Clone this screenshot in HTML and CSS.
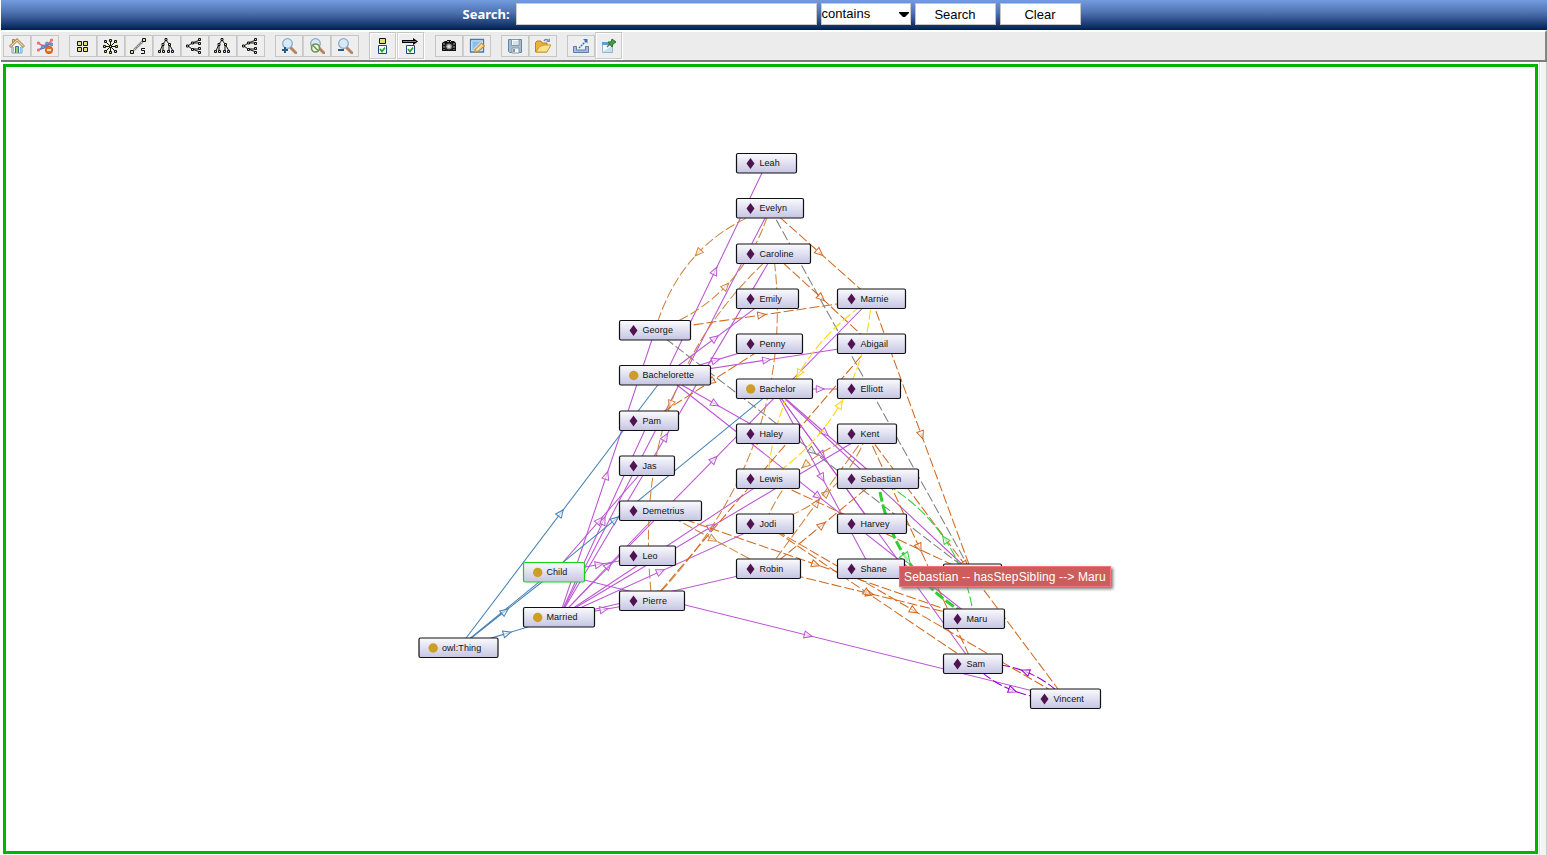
FILE: index.html
```html
<!DOCTYPE html>
<html lang="en">
<head>
<meta charset="utf-8">
<title>Ontology graph</title>
<link rel="stylesheet" href="styles.css">
</head>
<body>
<div class="app">
  <header class="search-bar">
    <label class="search-label" for="q">Search:</label>
    <input class="search-input" id="q" type="text">
    <div class="mode"><span>contains</span><svg width="10" height="5" viewBox="0 0 10 5"><path d="M0 0H10V1L6 5H4L0 1Z"/></svg></div>
    <button class="btn">Search</button>
    <button class="btn">Clear</button>
  </header>
  <nav class="toolbar">
    <div class="group">
      <button class="tool"><svg viewBox="0 0 16 16"><path d="M3 7V15H13V7L8 2Z" fill="#f4fbff" stroke="#6c9fc5"/><path d="M3.500 1.500H5.500V5L3.500 6Z" fill="#e7d3a6" stroke="#a57d4d"/><path d="M1 9L8 2L15 9" fill="none" stroke="#a17b4b" stroke-width="2.800"/><path d="M1.500 8.500L8 2L14.500 8.500" fill="none" stroke="#efd9a8" stroke-width="1.200"/><path d="M4.500 9V14M11.500 9V14" stroke="#8bbce0"/><path d="M6.500 15V8.500H9.500V15" fill="#8ed15f" stroke="#3d71a6"/></svg></button>
      <button class="tool"><svg viewBox="0 0 16 16"><path d="M1 5L8 9L15 2M1 12L8 9L15 5M5 8L12 6" fill="none" stroke="#f06a70" stroke-width="1.500"/><path d="M3 11L8 9L12 6" stroke="#4f87d0" fill="none" stroke-width="1.500"/><g fill="#f26c70"><circle cx="1.500" cy="5" r="1.600"/><circle cx="14.500" cy="2" r="1.600"/><circle cx="1.500" cy="12" r="1.600"/></g><g fill="#6a9fe0" stroke="#3f70b8" stroke-width=".6"><circle cx="6" cy="9" r="1.800"/><circle cx="10" cy="5.500" r="1.500"/><circle cx="14.500" cy="6.500" r="1.500"/></g><circle cx="12" cy="12" r="3.700" fill="#ed7117" stroke="#c4420e" stroke-width=".7"/><path d="M10 12H14" stroke="#fff" stroke-width="1.500"/></svg></button>
    </div>
    <div class="group">
      <button class="tool"><svg viewBox="0 0 16 16" class="net"><path d="M3.500 3.500H7.500V7.500H3.500ZM9.500 3.500H13.500V7.500H9.500ZM3.500 9.500H7.500V13.500H3.500ZM9.500 9.500H13.500V13.500H9.500Z"/></svg></button>
      <button class="tool"><svg viewBox="0 0 16 16" class="net"><path d="M8.500 2V15M2 8.500H15M4 4L13 13M13 4L4 13"/><path d="M7.500 1.500h2v2h-2zM7.500 13.500h2v2h-2zM1.500 7.500h2v2h-2zM13.500 7.500h2v2h-2zM2.500 2.500h2v2h-2zM12.500 2.500h2v2h-2zM2.500 12.500h2v2h-2zM12.500 12.500h2v2h-2zM7.500 7.500h2v2h-2z"/></svg></button>
      <button class="tool"><svg viewBox="0 0 16 16" class="net"><g class="spring"><path d="M4 12L13 3"/><path class="coil" d="M4 12L13 3"/></g><path d="M.5 12.500h3v3h-3zM12.500 .5h3v3h-3z"/><path d="M15 10.500H11.500V12.500H14.500V15.500H11" fill="none"/></svg></button>
      <button class="tool"><svg viewBox="0 0 16 16" class="net"><path d="M8 2L5 6L2 13M5 6V13M8 2L11 6L15 13M11 6V13" fill="none"/><path d="M7 .5h2v2h-2zM4 5.500h2v2h-2zM10.500 5.500h2v2h-2zM.5 12.500h2v2h-2zM4.500 12.500h2v2h-2zM9.500 12.500h2v2h-2zM13.500 12.500h2v2h-2z"/></svg></button>
      <button class="tool"><svg viewBox="0 0 16 16" class="net"><path d="M2 8L6 5L14 2M6 5H14M2 8L6 11L14 14M6 11H14" fill="none"/><path d="M.5 7h2v2h-2zM5.500 4h2v2h-2zM5.500 10.500h2v2h-2zM12.500 .5h2v2h-2zM12.500 4.500h2v2h-2zM12.500 9.500h2v2h-2zM12.500 13.500h2v2h-2z"/></svg></button>
      <button class="tool"><svg viewBox="0 0 16 16" class="net"><path d="M8 2L5 6L2 13M5 6V13M8 2L11 6L15 13M11 6V13" fill="none"/><path d="M7 .5h2v2h-2zM4 5.500h2v2h-2zM10.500 5.500h2v2h-2zM.5 12.500h2v2h-2zM4.500 12.500h2v2h-2zM9.500 12.500h2v2h-2zM13.500 12.500h2v2h-2z"/></svg></button>
      <button class="tool"><svg viewBox="0 0 16 16" class="net"><path d="M2 8L6 5L14 2M6 5H14M2 8L6 11L14 14M6 11H14" fill="none"/><path d="M.5 7h2v2h-2zM5.500 4h2v2h-2zM5.500 10.500h2v2h-2zM12.500 .5h2v2h-2zM12.500 4.500h2v2h-2zM12.500 9.500h2v2h-2zM12.500 13.500h2v2h-2z"/></svg></button>
    </div>
    <div class="group">
      <button class="tool"><svg viewBox="0 0 16 16" class="lens"><path class="grip" d="M10 10L15 15"/><circle cx="6.500" cy="5.500" r="4.800"/><path class="sign" d="M1 12H7M4 9V15"/></svg></button>
      <button class="tool"><svg viewBox="0 0 16 16" class="lens"><path class="grip" d="M10 10L15 15"/><circle cx="6.500" cy="5.500" r="4.800"/><circle class="reset" cx="6.500" cy="10" r="4"/><path d="M4 7.500L9 12.500" stroke="#6f9351" stroke-width="1.500"/></svg></button>
      <button class="tool"><svg viewBox="0 0 16 16" class="lens"><path class="grip" d="M10 10L15 15"/><circle cx="6.500" cy="5.500" r="4.800"/><path class="sign" d="M1 12H7"/></svg></button>
    </div>
    <div class="group">
      <button class="tool raised"><svg viewBox="0 0 16 16"><path d="M5.500 .5H11.500V5.500H5.500Z" fill="#e3df73" stroke="#111"/><path d="M4.500 7.500H12.500V15.500H4.500Z" fill="#fff" stroke="#194a7c"/><path d="M6 11L8 13.500L11 9.500" fill="none" stroke="#23a523" stroke-width="1.700"/></svg></button>
      <button class="tool raised"><svg viewBox="0 0 16 16"><path d="M0 3.500H14" stroke="#000" stroke-width="3"/><path d="M11 0L16 3.500L11 7Z"/><path d="M1 3.500H14" stroke="#1b9fe5"/><path d="M4.500 7.500H12.500V15.500H4.500Z" fill="#fff" stroke="#194a7c"/><path d="M6 11L8 13.500L11 9.500" fill="none" stroke="#23a523" stroke-width="1.700"/></svg></button>
    </div>
    <div class="group">
      <button class="tool"><svg viewBox="0 0 16 16"><path d="M1 5L4 3H6V2H10V3H13L15 5V13H1Z" fill="#111"/><path d="M3 5V12M13 5V12M6 3.500H10" stroke="#aaa" stroke-dasharray="2 1"/><circle cx="8" cy="8.500" r="3.500" fill="#8b9292" stroke="#222"/><circle cx="8" cy="8.500" r="1.700" fill="#d8dcda"/></svg></button>
      <button class="tool"><svg viewBox="0 0 16 16"><path d="M1.500 1.500H14.500V14H1.500Z" fill="#d9edfd" stroke="#4779ad" stroke-width="1.300"/><path d="M3.500 3.500H12.500V12H3.500Z" fill="#8ebce8" stroke="#a9cbed"/><path d="M4 11L11 4H12V10L8 12Z" fill="#c4def4"/><path d="M5.500 14.500L6.500 11L12.500 5L15.500 8L9 13.500Z" fill="#f6cb70" stroke="#bc833a"/><path d="M8 12L13 7" stroke="#fff0a9"/></svg></button>
    </div>
    <div class="group">
      <button class="tool"><svg viewBox="0 0 16 16"><path d="M1.500 1.500H14.500V14.500H2.500L1.500 13.500Z" fill="#a7bdcf" stroke="#6484a2"/><path d="M4.500 1.500H12V7.500H4.500ZM5 10H12V15H5Z" fill="#f5fafc" stroke="#8299ae"/><path d="M6 4H11M6 6H11" stroke="#b9c9d7"/><path d="M7 11V14" stroke="#58718b" stroke-width="1.500"/></svg></button>
      <button class="tool"><svg viewBox="0 0 16 16"><path d="M.5 14V4.500L2 3H6L7 5H12V14Z" fill="#e7b43e" stroke="#bf7d24"/><path d="M1 14L4.500 8.500L9 7H16L12 14Z" fill="#ffe28b" stroke="#d19531"/><path d="M9 3C10 1 12 1 14 3" fill="none" stroke="#6687aa" stroke-width="1.500"/><path d="M11 4H15V0Z" fill="#7898bb"/></svg></button>
    </div>
    <div class="group">
      <button class="tool"><svg viewBox="0 0 16 16"><path d="M.5 8.500H3.500V12H12.500V8.500H15.500V14.500H.5Z" fill="#a9bad8" stroke="#617bab"/><path d="M6 10L13 3" stroke="#2d72b6" stroke-width="1.300" stroke-dasharray="2 .7"/><path d="M10 1H14.500V5.500Z" fill="#2f74b7"/></svg></button>
      <button class="tool raised"><svg viewBox="0 0 16 16"><path d="M2.500 4.500H12.500V14.500H2.500Z" fill="#f3faff" stroke="#91b4d5"/><path d="M2 4H11V7H2Z" fill="#5e9fd2"/><path d="M2 14L12 8V14Z" fill="#c7e0ec"/><path d="M7 9L11 5" stroke="#666" stroke-width="1.300"/><path d="M8 4L11 4L12 1L16 4L13 6L12 9Z" fill="#43a047" stroke="#21752c"/></svg></button>
    </div>
  </nav>
  <main class="workspace">
    <div class="canvas">
      <svg class="graph" id="graph" width="1529" height="785" viewBox="6 67 1529 785">
        <defs><linearGradient id="nodeFill" x1="0" y1="0" x2="0" y2="1"><stop offset="0" stop-color="#fbfbfe"/><stop offset="1" stop-color="#c5c5e3"/></linearGradient></defs>
      </svg>
      <div class="tooltip">Sebastian -- hasStepSibling --&gt; Maru</div>
    </div>
  </main>
</div>
<script src="graph.js"></script>
</body>
</html>
```

FILE: styles.css
```css
* { box-sizing: border-box; }
body { margin: 0; background: #fff; font: 13px "Liberation Sans", Arial, sans-serif; overflow: hidden; }
.app { display: flex; flex-direction: column; height: 855px; }
.search-bar { flex: 0 0 30px; margin-left: 1px; padding: 3px 5px 0 0; display: flex; justify-content: center; align-items: flex-start; background: linear-gradient(#739ce0, #4b6fac 45%, #001f55); }
.search-label { width: 53px; color: #fff; font: bold 13px/22px "Noto Sans", "Open Sans", sans-serif; white-space: nowrap; }
.search-input { width: 301px; height: 22px; margin: 0 4px 0 0; padding: 0 2px; border: 1px solid #ccc; background: #fff; }
.mode { width: 90px; height: 22px; margin-right: 4px; padding: 0 1px 0 0; display: flex; align-items: center; justify-content: space-between; border: 1px solid #ccc; background: #fff; line-height: 18px; }
.mode span { padding-bottom: 1px; letter-spacing: .05px; }
.btn { width: 81px; height: 22px; margin-right: 4px; padding: 1px 0 0; border: 1px solid #c5c5c5; background: #fff; color: #000; font: 13px "Liberation Sans", Arial, sans-serif; }
.btn:last-child { margin-right: 0; }
.toolbar { flex: 0 0 32px; margin-left: 1px; padding: 0 0 0 2px; display: flex; align-items: center; gap: 10px; background: #ececec; border-top: 2px solid #fff; border-right: 2px solid #858585; border-bottom: 2px solid #7b7b7b; }
.group { display: flex; align-items: center; height: 28px; }
.tool { width: 28px; height: 22px; padding: 0; display: flex; align-items: center; justify-content: center; border: 1px solid #c6c6c6; background: #eee; }
.tool + .tool { border-left-color: #d0d0d0; }
.tool svg { width: 16px; height: 16px; display: block; }
.tool .net, .raised svg { margin-left: -2px; }
.raised { height: 28px; border-color: #c4c4c4 #fff #fff #c4c4c4; box-shadow: inset -1px -1px #c9c9c9, inset 1px 1px #fff; }
.net path { fill: #e7df80; stroke: #111; }
.net path[fill="none"] { fill: none; }
.net .spring path { stroke: #777; stroke-width: 2.4; }
.net .spring .coil { stroke: #ddd; stroke-width: 1.2; stroke-dasharray: 1 1; }
.lens circle { fill: #d8e9f8; stroke: #8ba9c6; stroke-width: 1.3; }
.lens .reset { fill: #edf5e5; stroke: #6f9351; stroke-width: 1.6; }
.lens .grip { stroke: #b98261; stroke-width: 3; stroke-linecap: round; }
.lens .sign { stroke: #205e91; stroke-width: 2; }
.workspace { flex: 1; padding: 2px 0 1px 3px; border-right: 1px solid #c8c8c8; background: linear-gradient(to right, #fff 1539px, #ddd 1539px, #ddd 1540px, #fff 1540px, #fff 1541px, #f4f4f4 1541px); }
.canvas { position: relative; width: 1535px; height: 790px; border: 3px solid #00b400; background: #fff; }
.graph { display: block; }
.edge { fill: none; stroke-width: 1.05; }
.dashed { stroke-dasharray: 10 3; }
.thick { stroke-width: 3; }
.arrow { fill: #fff; fill-opacity: .6; stroke-width: 1; }
.node { fill: url(#nodeFill); stroke: #111; stroke-width: 1.2; }
.selected { stroke: #12d512; }
.label { font: 9px "Liberation Sans", Arial, sans-serif; fill: #111; letter-spacing: .1px; }
.individual { fill: #4f134f; }
.class-dot { fill: #cc9d29; }
.tooltip { position: absolute; left: 893px; top: 499px; width: 212px; height: 21px; padding-left: 4px; border: 1px solid #f27575; background: #cd5c5c; color: #fff; font: 12px/20px "Liberation Sans", Arial, sans-serif; letter-spacing: .13px; white-space: nowrap; box-shadow: 2px 2px 3px #777; }
```

FILE: graph.js
```js
const svg = document.getElementById('graph');
const nodes = {
  Leah: [736.5, 153.5, 60], Evelyn: [736.5, 198.5, 67], Caroline: [736.5, 244, 74], Emily: [736.5, 289, 62],
  Penny: [736.5, 334, 66], Bachelor: [736.5, 379, 76, 1], Haley: [736.5, 424, 63], Lewis: [736.5, 469, 63],
  Jodi: [736.5, 514, 57], Robin: [736.5, 559, 64], George: [619.5, 320.5, 71], Bachelorette: [619.5, 365.5, 91, 1],
  Pam: [619.5, 411, 59], Jas: [619.5, 456, 55], Demetrius: [619.5, 501, 82], Leo: [619.5, 546, 56],
  Pierre: [619.5, 591, 65], Marnie: [837.5, 289, 68], Abigail: [837.5, 334, 68], Elliott: [837.5, 379, 63],
  Kent: [837.5, 424, 59], Sebastian: [837.5, 469, 81], Harvey: [837.5, 514, 69], Shane: [837.5, 559, 67],
  Alex: [943.5, 564, 58], Maru: [943.5, 609, 61], Sam: [943.5, 654, 59], Vincent: [1030.5, 689, 70],
  Child: [523.5, 562.5, 61, 1], Married: [523.5, 607.5, 71, 1], 'owl:Thing': [419, 638, 79, 1]
};
const orchid = '#ba55d3', blue = '#4682b4', gray = '#808080', choc = '#d2691e', peru = '#cd853f', gold = '#ffd700', green = '#32cd32', violet = '#9400d3';
// from, to, colour, line class, optional point the arc passes through
const edges = [
  ...['Leah', 'Emily', 'Penny', 'Abigail', 'Haley', 'Maru'].map(n => ['Bachelorette', n, orchid]),
  ...['Elliott', 'Sebastian', 'Shane', 'Harvey', 'Alex', 'Sam'].map(n => ['Bachelor', n, orchid]),
  ...['George', 'Pam', 'Evelyn', 'Caroline', 'Demetrius', 'Marnie', 'Kent', 'Lewis', 'Jodi', 'Robin', 'Pierre'].map(n => ['Married', n, orchid]),
  ...['Jas', 'Leo', 'Vincent'].map(n => ['Child', n, orchid]),
  ...['Bachelorette', 'Bachelor', 'Child', 'Married'].map(n => ['owl:Thing', n, blue]),
  ['Evelyn', 'Alex', gray, 'dashed'], ['George', 'Alex', gray, 'dashed'],
  ['Evelyn', 'George', peru, 'dashed', [697, 254]], ['George', 'Evelyn', peru, 'dashed', [727, 285]],
  ['Caroline', 'Pierre', peru, 'dashed', [670, 406]], ['Pierre', 'Caroline', peru, 'dashed', [756, 438]],
  ['Penny', 'Pam', choc, 'dashed'], ['Pierre', 'Abigail', choc, 'dashed'], ['Caroline', 'Abigail', choc, 'dashed'],
  ['Evelyn', 'Marnie', choc, 'dashed'], ['George', 'Marnie', choc, 'dashed'], ['Marnie', 'Alex', choc, 'dashed'],
  ['Marnie', 'Lewis', gold, 'dashed', [798, 375]], ['Lewis', 'Marnie', gold, 'dashed', [841, 403]],
  ['Kent', 'Jodi', peru, 'dashed', [804, 466]], ['Jodi', 'Kent', peru, 'dashed', [828, 492]],
  ['Robin', 'Kent', peru, 'dashed'], ['Robin', 'Sebastian', choc, 'dashed'], ['Demetrius', 'Robin', peru, 'dashed'],
  ['Demetrius', 'Maru', choc, 'dashed'], ['Robin', 'Maru', choc, 'dashed'], ['Jodi', 'Sam', choc, 'dashed'],
  ['Jodi', 'Vincent', choc, 'dashed'], ['Lewis', 'Alex', choc, 'dashed'], ['Kent', 'Sam', choc, 'dashed'],
  ['Kent', 'Vincent', choc, 'dashed'],
  ['Sam', 'Vincent', violet, 'dashed', [1014, 691]], ['Vincent', 'Sam', violet, 'dashed', [1024, 671]],
  ['Maru', 'Sebastian', green, 'dashed', [944, 538]], ['Sebastian', 'Maru', green, 'dashed thick', [908, 561]]
];
function add(tag, attrs, text) {
  const el = document.createElementNS('http://www.w3.org/2000/svg', tag);
  for (const key in attrs) el.setAttribute(key, attrs[key]);
  if (text) el.textContent = text;
  svg.appendChild(el);
}
const center = name => [nodes[name][0] + nodes[name][2] / 2, nodes[name][1] + 10];
for (const [from, to, colour, kind = '', via] of edges) {
  const [ax, ay] = center(from), [bx, by] = center(to);
  const mx = (ax + bx) / 2, my = (ay + by) / 2;
  const [px, py] = via || [mx, my];
  add('path', { class: 'edge ' + kind, stroke: colour, d: `M${ax} ${ay}Q${2 * px - mx} ${2 * py - my} ${bx} ${by}` });
  const angle = Math.atan2(by - ay, bx - ax) * 180 / Math.PI;
  const big = kind.includes('thick');
  add('path', { class: 'arrow', stroke: colour, transform: `translate(${px} ${py}) rotate(${angle})`, d: big ? 'M-8 -5L4 0L-8 5Z' : 'M-5.500 -3.500L2.500 0L-5.500 3.500Z' });
}
for (const [name, [x, y, w, isClass]] of Object.entries(nodes)) {
  add('rect', { class: 'node' + (name === 'Child' ? ' selected' : ''), x, y, width: w, height: 19.5, rx: 1.5 });
  if (isClass) add('circle', { class: 'class-dot', cx: x + 14.2, cy: y + 10, r: 4.7 });
  else add('path', { class: 'individual', d: `M${x + 14} ${y + 4.5}L${x + 18} ${y + 10}L${x + 14} ${y + 15.5}L${x + 10} ${y + 10}Z` });
  if (name !== 'Alex') add('text', { class: 'label', x: x + 22.9, y: y + 12.8 }, name);
}
```
